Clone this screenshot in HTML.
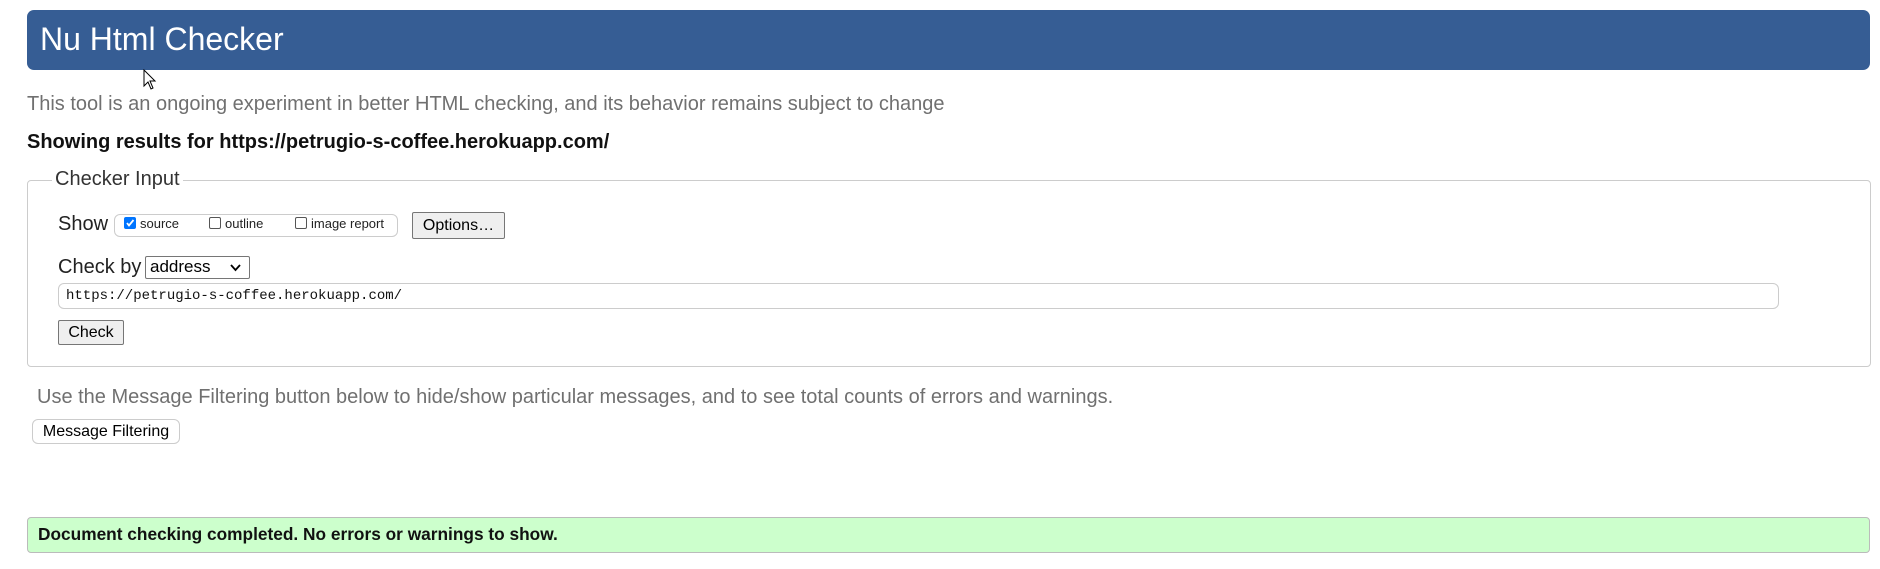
<!DOCTYPE html>
<html><head><meta charset="utf-8"><style>
body{margin:0;width:1880px;height:569px;background:#fff;font-family:"Liberation Sans",Arial,sans-serif;position:relative;overflow:hidden}
.a{position:absolute;white-space:nowrap}
.hdr{left:27px;top:10px;width:1843px;height:60px;background:#365d94;border-radius:7px}
.hdr span{position:absolute;left:13px;top:11px;color:#fff;font-size:32px}
.gray{color:#707070;font-size:20px}
.fs{left:27px;top:180px;width:1842px;height:185px;border:1px solid #ccc;border-radius:4px}
.btn{border:1px solid #767676;background:#efefef;border-radius:2px;font-size:15px;text-align:center;box-sizing:border-box;color:#000}
.cb{display:inline-block;width:12px;height:12px;border:1px solid #555;border-radius:2px;box-sizing:border-box;vertical-align:-1px;margin-right:4px;background:#fff}
</style></head><body>
<div class="a hdr"><span>Nu Html Checker</span></div>
<svg class="a" style="left:143px;top:69px" width="14" height="22" viewBox="0 0 14 22"><path d="M1 1 L1 17 L5 13 L8 20 L10 19 L7 12 L12 12 Z" fill="#fff" stroke="#000" stroke-width="1"/></svg>
<div class="a gray" style="left:27px;top:93px">This tool is an ongoing experiment in better HTML checking, and its behavior remains subject to change</div>
<div class="a" style="left:27px;top:131px;font-size:20px;font-weight:bold;color:#111">Showing results for https://petrugio-s-coffee.herokuapp.com/</div>
<div class="a fs"></div>
<div class="a" style="left:52px;top:168px;background:#fff;padding:0 3px;font-size:20px;color:#333">Checker Input</div>
<div class="a" style="left:58px;top:213px;font-size:20px;color:#222">Show</div>
<div class="a" style="left:114px;top:214px;width:284px;height:23px;border:1px solid #ccc;border-radius:6px;box-sizing:border-box;font-size:13px;color:#222">
<div class="a" style="left:9px;top:1px"><span class="cb" style="background:#0075ff;border-color:#0075ff;position:relative"><svg style="position:absolute;left:0;top:0" width="10" height="10" viewBox="0 0 10 10"><path d="M2 5 L4 7.5 L8.5 2" stroke="#fff" stroke-width="1.8" fill="none"/></svg></span>source</div>
<div class="a" style="left:94px;top:1px"><span class="cb"></span>outline</div>
<div class="a" style="left:180px;top:1px"><span class="cb"></span>image report</div>
</div>
<div class="a btn" style="left:412px;top:212px;width:93px;height:27px;line-height:25px;font-size:16px">Options…</div>
<div class="a" style="left:58px;top:256px;font-size:20px;color:#222">Check by</div>
<div class="a" style="left:145px;top:256px;width:105px;height:23px;border:1px solid #767676;border-radius:2px;box-sizing:border-box;font-size:17px;padding-left:4px;line-height:20px">address<svg style="position:absolute;right:8px;top:7px" width="11" height="8" viewBox="0 0 11 8"><path d="M1 1 L5.5 6 L10 1" stroke="#000" stroke-width="1.8" fill="none"/></svg></div>
<div class="a" style="left:58px;top:283px;width:1721px;height:26px;border:1px solid #ccc;border-radius:6px;box-sizing:border-box;font-family:'Liberation Mono',monospace;font-size:14px;line-height:24px;padding-left:7px;color:#111">https://petrugio-s-coffee.herokuapp.com/</div>
<div class="a btn" style="left:58px;top:320px;width:66px;height:25px;line-height:23px;font-size:16px">Check</div>
<div class="a gray" style="left:37px;top:386px">Use the Message Filtering button below to hide/show particular messages, and to see total counts of errors and warnings.</div>
<div class="a" style="left:32px;top:419px;width:148px;height:25px;border:1px solid #ccc;border-radius:6px;box-sizing:border-box;font-size:16px;line-height:23px;text-align:center;background:#fff">Message Filtering</div>
<div class="a" style="left:27px;top:517px;width:1843px;height:36px;background:#ccffcc;border:1px solid #bbb;border-radius:4px;box-sizing:border-box"></div>
<div class="a" style="left:38px;top:524px;font-size:17.3px;font-weight:bold;color:#111">Document checking completed. No errors or warnings to show.</div>
</body></html>
